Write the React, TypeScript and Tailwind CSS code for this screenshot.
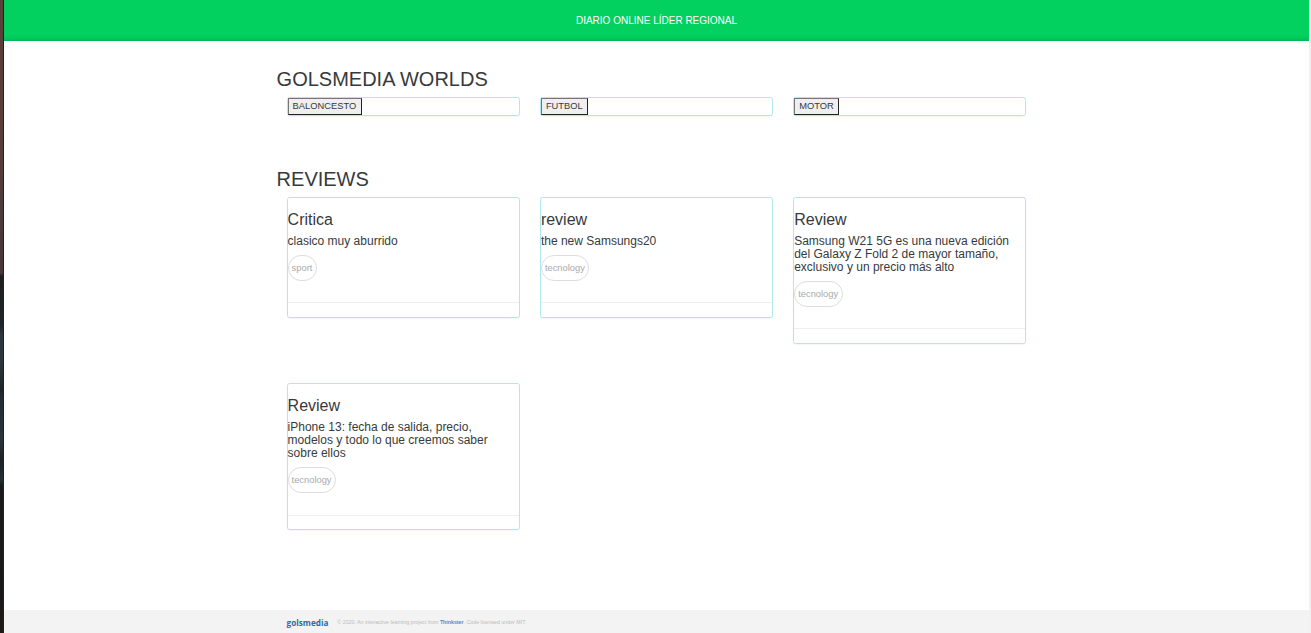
const worlds = ["BALONCESTO", "FUTBOL", "MOTOR"];

const reviews = [
  { title: "Critica", text: "clasico muy aburrido", tag: "sport" },
  { title: "review", text: "the new Samsungs20", tag: "tecnology" },
  {
    title: "Review",
    text: "Samsung W21 5G es una nueva edición del Galaxy Z Fold 2 de mayor tamaño, exclusivo y un precio más alto",
    tag: "tecnology",
  },
  {
    title: "Review",
    text: "iPhone 13: fecha de salida, precio, modelos y todo lo que creemos saber sobre ellos",
    tag: "tecnology",
  },
];

function WorldCard({ name }: { name: string }) {
  return (
    <div className="flex h-[19px] items-start rounded-[2.5px] border border-[#b0e6ee] shadow-[0_1px_1px_rgba(0,0,0,0.04)]">
      <button className="h-[17px] border border-t-[#767676] border-l-[#767676] border-r-[#222] border-b-[#222] bg-[#efefef] pr-[4.4px] pb-[1px] pl-1 text-[9.33px] leading-[14px] text-[#373a3c]">
        {name}
      </button>
    </div>
  );
}

function ReviewCard({ title, text, tag }: { title: string; text: string; tag: string }) {
  return (
    <article className="flex flex-col items-start rounded-[2.5px] border border-[#b0e6ee] pt-[13px] shadow-[0_1px_1px_rgba(0,0,0,0.04)]">
      <h3 className="text-[16px] leading-[18px] text-[#373a3c]">{title}</h3>
      <p className="mt-[6px] mb-[7px] pr-3 text-[12px] leading-[13px] text-[#373a3c]">{text}</p>
      <span className="flex h-[26px] items-center rounded-[13px] border border-[#ddd] pt-[1px] pr-[3.4px] pl-[3px] text-[9.33px] text-[#aaa]">
        {tag}
      </span>
      <div className="mt-[21px] h-[15px] w-full border-t border-[#eceeef]" />
    </article>
  );
}

export default function App() {
  return (
    <div className="flex h-[633px] w-full overflow-hidden bg-white font-['Liberation_Sans',Arial,sans-serif]">
      <div className="w-[3px] shrink-0 bg-[linear-gradient(180deg,#5b3f38_0,#573f39_150px,#4b3a3c_220px,#493638_273px,#1d1e20_276px,#202427_325px,#2c363e_335px,#2c373e_360px,#202427_390px,#202b33_395px,#28343b_440px,#1d2225_460px,#252e34_480px,#191a19_485px,#1c1917_633px)]" />
      <div className="w-px shrink-0 bg-[#25201c]" />
      <div className="flex min-w-0 grow flex-col">
        <header className="flex h-[41px] shrink-0 items-center justify-center bg-[#02d05f] text-[10px] text-white shadow-[inset_0_-5px_4px_-4px_rgba(0,80,35,0.3)]">
          DIARIO ONLINE LÍDER REGIONAL
        </header>
        <main className="ml-[272.6px] w-[760px] grow">
          <h2 className="mt-[27px] text-[20px] leading-[22px] text-[#373a3c]">GOLSMEDIA WORLDS</h2>
          <section className="mt-[7px] ml-[10px] grid grid-cols-[233px_233px_233px] gap-x-[20.3px]">
            {worlds.map((name) => (
              <WorldCard key={name} name={name} />
            ))}
          </section>
          <h2 className="mt-[52px] text-[20px] leading-[22px] text-[#373a3c]">REVIEWS</h2>
          <section className="mt-[7px] ml-[10px] grid grid-cols-[233px_233px_233px] items-start gap-x-[20.3px] gap-y-[39.3px]">
            {reviews.map((review, i) => (
              <div key={review.text} className={i === 3 ? "[&>article>div]:mt-[22px] [&>article>div]:h-[14px]" : ""}>
                <ReviewCard {...review} />
              </div>
            ))}
          </section>
        </main>
        <footer className="flex h-[23px] shrink-0 items-center bg-[#f3f3f3] pt-[3px] pl-[282.6px]">
          <span className="text-[8.2px] font-bold text-[#2d69b3] font-['Open_Sans',sans-serif]">golsmedia</span>
          <span className="ml-[9px] text-[5.28px] text-[#bbb]">
            © 2020. An interactive learning project from <b className="text-[#5b84c4]">Thinkster</b>. Code licensed under MIT.
          </span>
        </footer>
      </div>
      <div className="w-[2px] shrink-0 bg-[#f1f1f1]" />
    </div>
  );
}
